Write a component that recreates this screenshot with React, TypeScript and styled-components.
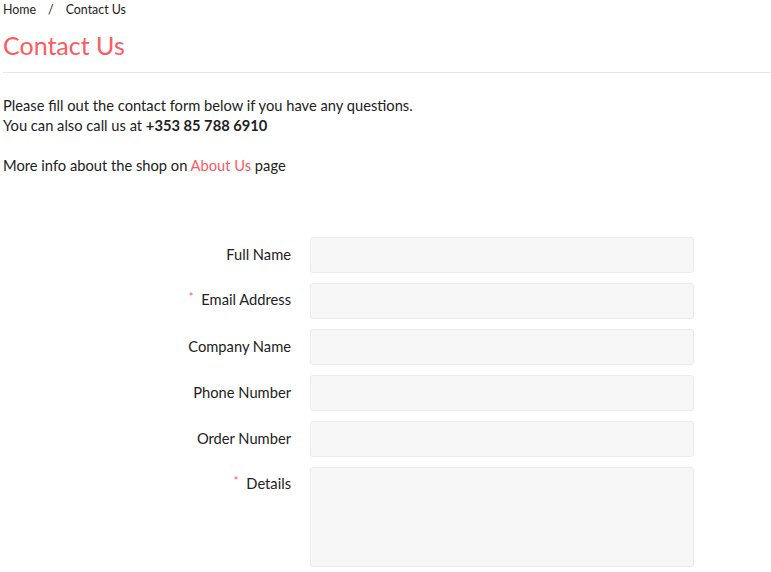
import React from "react";
import styled, { createGlobalStyle } from "styled-components";

const GlobalStyle = createGlobalStyle`
  html, body {
    margin: 0;
    padding: 0;
    background: #fff;
  }
  body {
    font-family: Lato, "Liberation Sans", sans-serif;
    color: #222;
    font-size: 14.7px;
  }
`;

const accent = "#ff5a5f";

const Page = styled.div`
  padding: 0 0 0 3px;
`;

const Breadcrumb = styled.nav`
  display: flex;
  align-items: center;
  gap: 12px;
  font-size: 12.4px;
  line-height: 19px;
  color: #222;
`;

const Crumb = styled.a`
  color: #222;
  text-decoration: none;
`;

const Title = styled.h1`
  margin: 9px 0 0;
  font-size: 25px;
  font-weight: 400;
  line-height: 34px;
  color: ${accent};
`;

const Divider = styled.hr`
  margin: 10px 0 0;
  border: 0;
  border-top: 1px solid #e8e8e8;
`;

const Intro = styled.div`
  margin-top: 22px;
  line-height: 20px;

  p {
    margin: 0;
  }

  p + p {
    margin-top: 20px;
  }

  strong {
    font-weight: 700;
  }
`;

const TextLink = styled.a`
  color: ${accent};
  text-decoration: none;
`;

const Form = styled.form`
  margin-top: 62px;
  display: flex;
  flex-direction: column;
  gap: 10px;
`;

const Row = styled.div<{ $top?: boolean }>`
  display: grid;
  grid-template-columns: 288px 384px;
  column-gap: 19px;
  align-items: ${(p) => (p.$top ? "start" : "center")};
`;

const Label = styled.label<{ $top?: boolean }>`
  text-align: right;
  line-height: 20px;
  padding-top: ${(p) => (p.$top ? "6px" : "0")};
  margin-top: ${(p) => (p.$top ? "0" : "-2px")};
`;

const Star = styled.span`
  position: relative;
  top: -4px;
  color: ${accent};
  font-size: 11px;
  margin-right: 8px;
`;

const fieldCss = `
  box-sizing: border-box;
  width: 100%;
  background: #f7f7f7;
  border: 1px solid #ececec;
  border-radius: 3px;
  font: inherit;
  padding: 6px 10px;
  outline: none;
`;

const Input = styled.input`
  ${fieldCss}
  height: 36px;
`;

const TextArea = styled.textarea`
  ${fieldCss}
  height: 100px;
  resize: none;
  display: block;
`;

const fields = [
  { id: "name", label: "Full Name" },
  { id: "email", label: "Email Address", required: true },
  { id: "company", label: "Company Name" },
  { id: "phone", label: "Phone Number" },
  { id: "order", label: "Order Number" },
];

export default function App() {
  return (
    <Page>
      <GlobalStyle />
      <Breadcrumb>
        <Crumb href="#">Home</Crumb>
        <span>/</span>
        <span>Contact Us</span>
      </Breadcrumb>
      <Title>Contact Us</Title>
      <Divider />
      <Intro>
        <p>
          Please fill out the contact form below if you have any questions.
          <br />
          You can also call us at <strong>+353 85 788 6910</strong>
        </p>
        <p>
          More info about the shop on <TextLink href="#">About Us</TextLink> page
        </p>
      </Intro>
      <Form>
        {fields.map((f) => (
          <Row key={f.id}>
            <Label htmlFor={f.id}>
              {f.required && <Star>*</Star>}
              {f.label}
            </Label>
            <Input id={f.id} type="text" />
          </Row>
        ))}
        <Row $top>
          <Label htmlFor="details" $top>
            <Star>*</Star>
            Details
          </Label>
          <TextArea id="details" />
        </Row>
      </Form>
    </Page>
  );
}
